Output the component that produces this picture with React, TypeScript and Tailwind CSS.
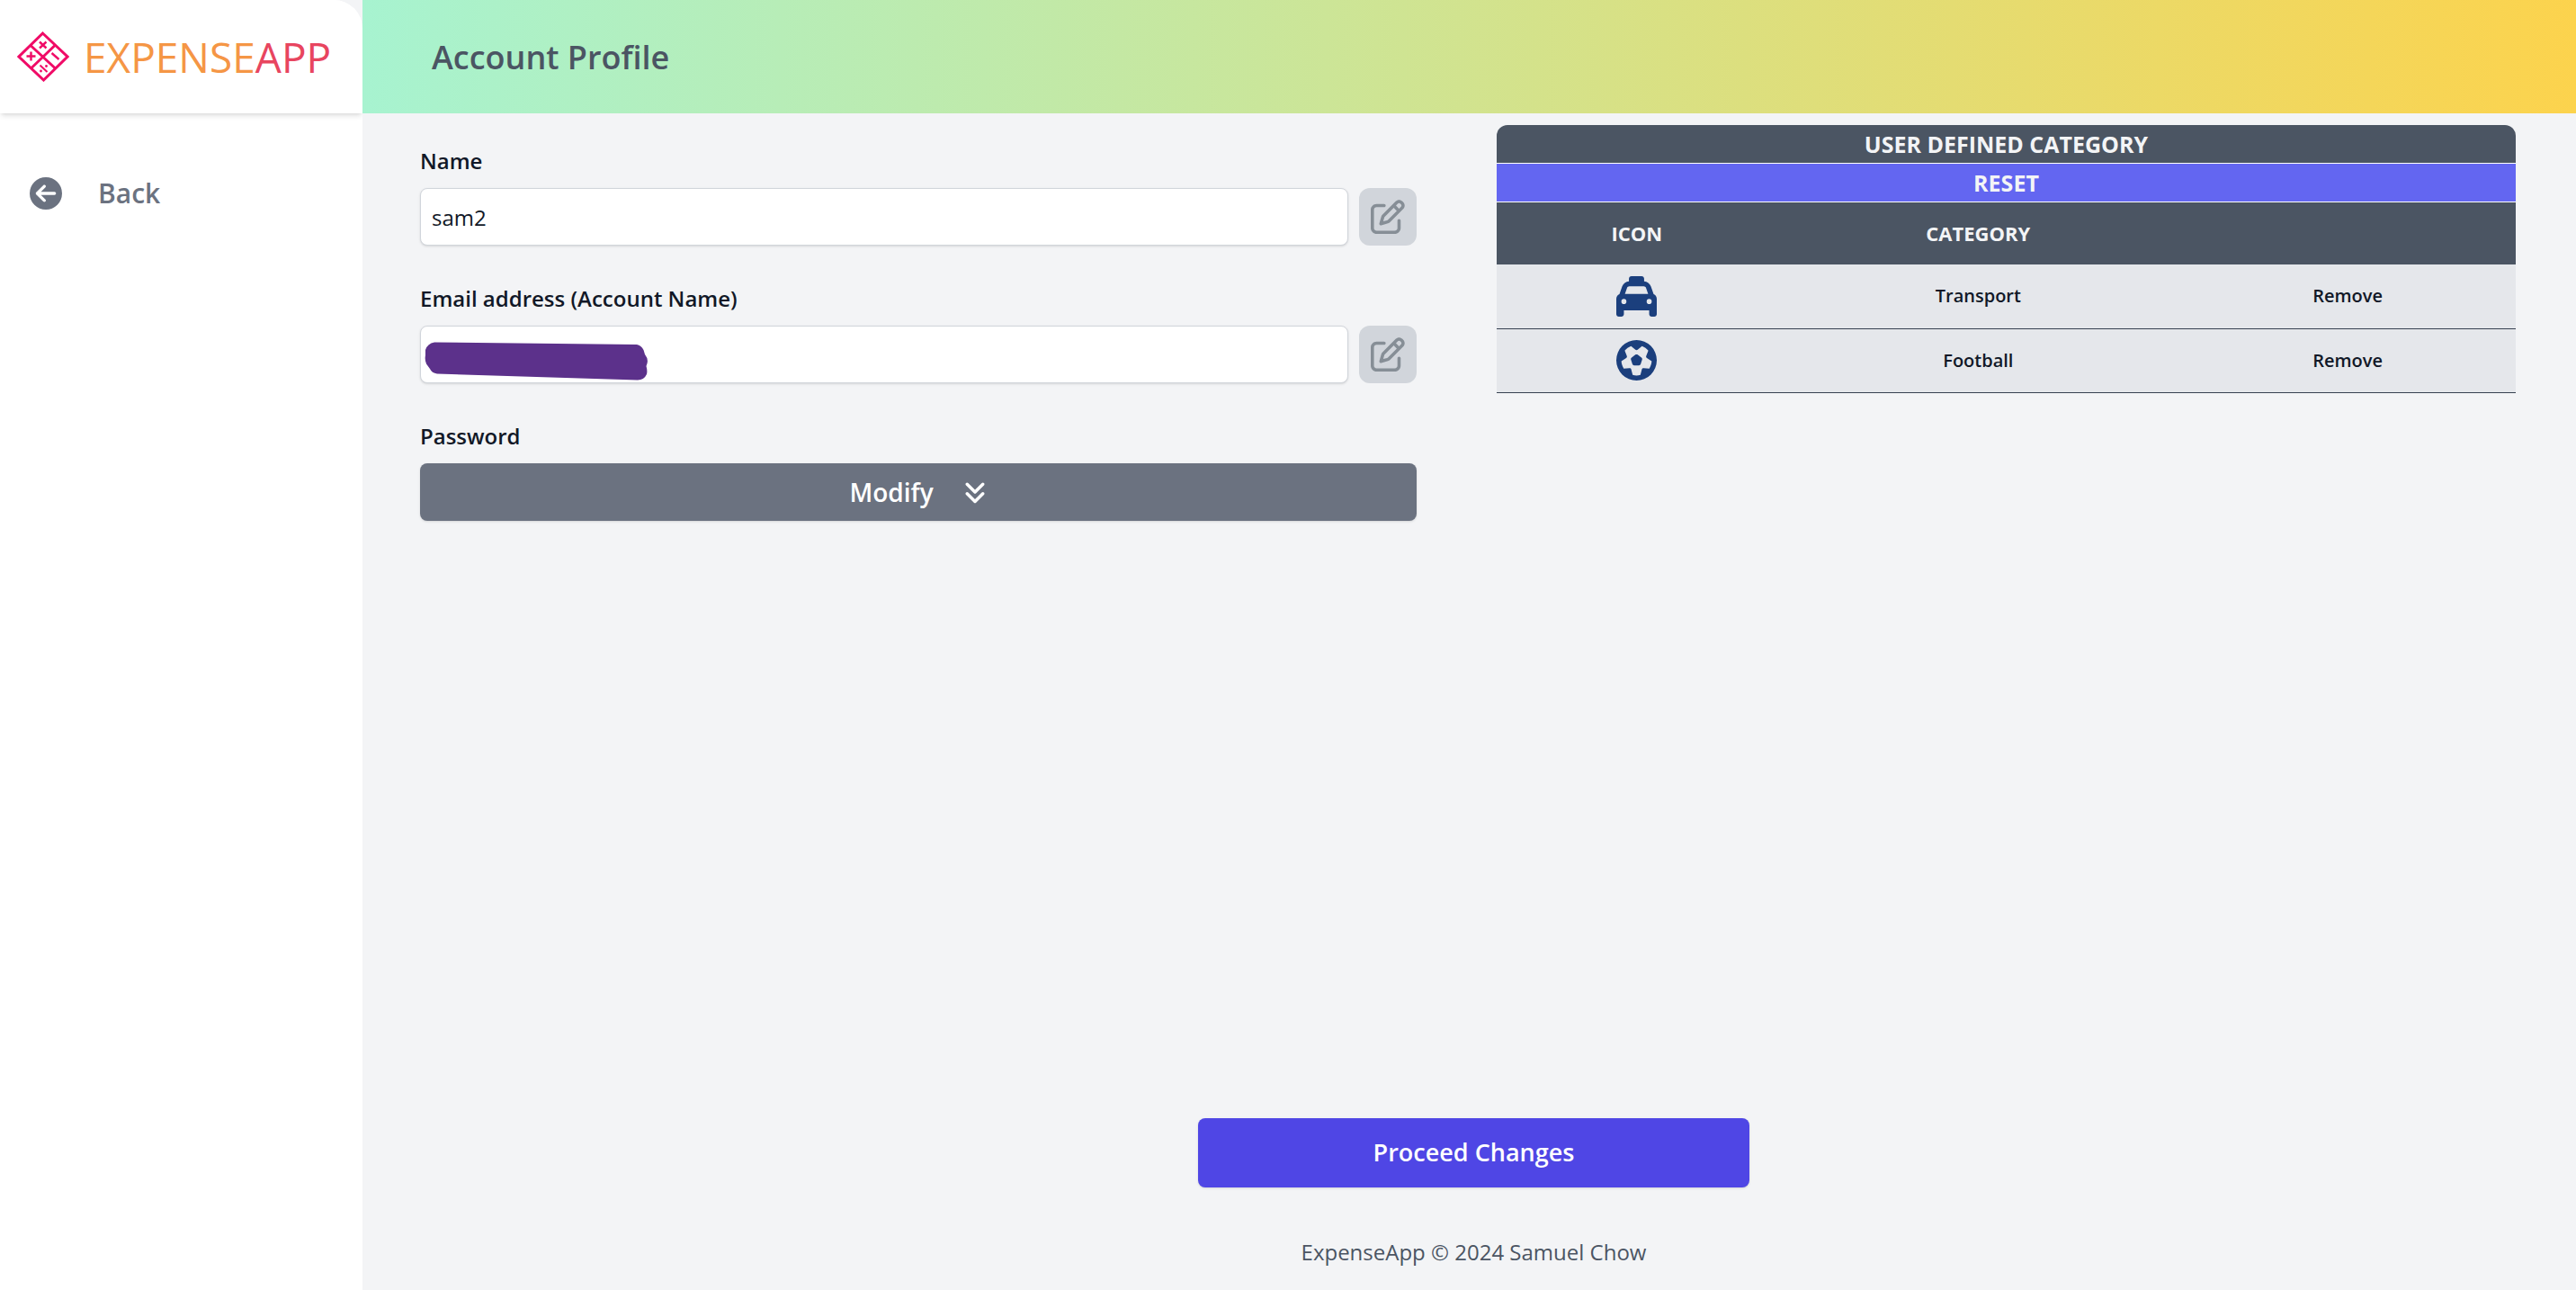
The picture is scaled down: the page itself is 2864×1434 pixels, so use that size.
import type { ReactNode } from "react";
import {
  FaAnglesDown,
  FaCircleArrowLeft,
  FaFutbol,
  FaRegPenToSquare,
  FaTaxi,
} from "react-icons/fa6";

function Logo() {
  return (
    <svg viewBox="0 0 58 56" className="h-14 w-[58px] shrink-0" fill="none" stroke="#f00b67" strokeWidth="3" aria-hidden="true">
      <path d="M28.500 2 L56 28 L29.500 54 L2 28 Z" />
      <path d="M15 15.500 L43 41.500 M42.500 15 L15.500 41" />
      <g strokeWidth="2.4">
        <path d="M25 11.500 l7.500 7 M32.500 11.500 l-7.500 7" />
        <path d="M10.500 27.500 h10 M15.500 22.500 v10" />
        <path d="M38.500 24 l8 7" />
        <path d="M25.500 37.500 l8 7.500" strokeWidth="2" />
      </g>
      <circle cx="32.500" cy="38.500" r="1.400" fill="#f00b67" stroke="none" />
      <circle cx="26.500" cy="44" r="1.400" fill="#f00b67" stroke="none" />
    </svg>
  );
}

function Sidebar() {
  return (
    <aside className="w-[403px] shrink-0 overflow-hidden rounded-tr-[32px] bg-white">
      <div className="flex h-[126px] items-center gap-4 bg-white pl-[19px] shadow-md">
        <Logo />
        <span className="text-[46px] leading-none text-[#f59645]">
          EXPENSE<span className="text-[#e8455f]">APP</span>
        </span>
      </div>
      <nav className="pt-[65px] pl-[33px]">
        <a href="#back" className="flex items-center gap-10 text-[30px] leading-12 font-semibold text-[#6b7280]">
          <FaCircleArrowLeft className="size-9" />
          Back
        </a>
      </nav>
    </aside>
  );
}

function Field({ id, label, value, children }: { id: string; label: string; value: string; children?: ReactNode }) {
  return (
    <div className="flex flex-col gap-3">
      <label htmlFor={id} className="text-[24px] leading-9 font-semibold text-[#111827]">{label}</label>
      <div className="flex gap-3">
        <div className="relative grow">
          <input
            id={id}
            defaultValue={value}
            className="h-16 w-full rounded-lg border border-[#d1d5db] bg-white px-3 text-[24px] text-[#111827] shadow-sm"
          />
          {children}
        </div>
        <button type="button" aria-label={"Edit " + label} className="flex size-16 items-center justify-center rounded-xl bg-[#d1d5db] text-[#868e96]">
          <FaRegPenToSquare className="size-[38px]" />
        </button>
      </div>
    </div>
  );
}

function Redaction() {
  return (
    <svg viewBox="0 0 248 44" className="absolute top-[17px] left-[5px] h-11 w-[248px]" fill="#5c318b" aria-hidden="true">
      <path d="M11 1.500 L236 4 Q241 5 243.500 10 L245 15 Q249 20 247.500 25 L246.500 28 Q248 33 247 37 Q244 43.500 237 43.500 L14 36.500 Q8 35.500 6 31 L2 25.500 Q0 21 1 16 L1 10 Q3 3 11 1.500 Z" />
    </svg>
  );
}

const categories = [
  { name: "Transport", Icon: FaTaxi },
  { name: "Football", Icon: FaFutbol },
];

function CategoryTable() {
  return (
    <table className="w-full table-fixed text-center text-[#111827]">
      <colgroup>
        <col className="w-[27.5%]" />
        <col className="w-[39.5%]" />
        <col className="w-[33%]" />
      </colgroup>
      <thead className="text-[22px] font-bold text-[#f3f4f6]">
        <tr>
          <th colSpan={3} className="h-[42px] rounded-t-xl border-b border-white bg-[#4b5563] p-0 text-[25px] leading-9">
            USER DEFINED CATEGORY
          </th>
        </tr>
        <tr>
          <th colSpan={3} className="h-[43px] border-b border-white bg-[#6366f1] p-0 text-[25px] leading-9">
            <button className="w-full">RESET</button>
          </th>
        </tr>
        <tr className="h-[70px] bg-[#4b5563]">
          <th>ICON</th>
          <th>CATEGORY</th>
          <th aria-label="Actions" />
        </tr>
      </thead>
      <tbody className="text-[20px] font-semibold">
        {categories.map(({ name, Icon }) => (
          <tr key={name} className="h-[71px] border-b border-[#374151] bg-[#e5e7eb]">
            <td><Icon className="mx-auto size-[45px] text-[#1b3f7d]" /></td>
            <td>{name}</td>
            <td><button>Remove</button></td>
          </tr>
        ))}
      </tbody>
    </table>
  );
}

export default function App() {
  return (
    <div className="flex min-h-screen bg-[#f3f4f6] font-['Open_Sans','Noto_Sans',sans-serif]">
      <Sidebar />
      <div className="flex min-w-0 grow flex-col">
        <header className="flex h-[126px] items-center bg-linear-to-r/srgb from-[#a7f3d0] to-[#fcd34d] pt-0.5 pl-[77px]">
          <h1 className="text-[36px] font-semibold text-[#4b5563]">Account Profile</h1>
        </header>
        <main className="grid grow grid-cols-[1108fr_1133fr] content-start gap-x-[89px] pr-[67px] pl-16">
          <form className="flex flex-col gap-[41px] pt-[35px]">
            <Field id="name" label="Name" value="sam2" />
            <Field id="email" label="Email address (Account Name)" value="">
              <Redaction />
            </Field>
            <div className="flex flex-col gap-3">
              <span id="password-label" className="text-[24px] leading-9 font-semibold text-[#111827]">Password</span>
              <button type="button" aria-describedby="password-label" className="flex h-16 items-center justify-center gap-8 rounded-lg bg-[#6b7280] text-[28px] font-semibold text-white shadow-sm">
                Modify
                <FaAnglesDown className="size-7" />
              </button>
            </div>
          </form>
          <section className="pt-[13px]">
            <CategoryTable />
          </section>
        </main>
        <footer className="flex flex-col items-center gap-[54px] pb-6 pl-2.5">
          <button className="h-[77px] w-1/4 rounded-lg bg-[#4f46e5] text-[27px] font-semibold text-white shadow-sm">
            Proceed Changes
          </button>
          <p className="text-[24px] leading-9 text-[#4b5563]">ExpenseApp © 2024 Samuel Chow</p>
        </footer>
      </div>
    </div>
  );
}
